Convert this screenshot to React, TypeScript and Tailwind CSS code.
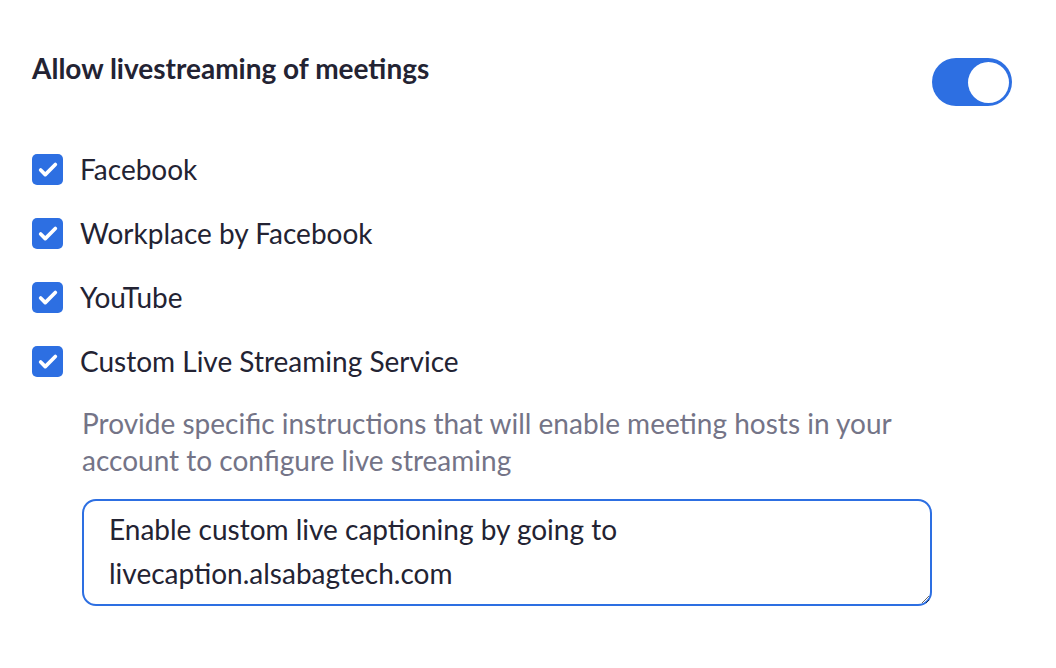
import { Check } from 'lucide-react';

const services = ['Facebook', 'Workplace by Facebook', 'YouTube', 'Custom Live Streaming Service'];

function CheckBox() {
  return (
    <span className="flex h-[31px] w-[31px] shrink-0 items-center justify-center rounded-[5px] bg-[#2d6fe2]">
      <Check className="h-[22px] w-[22px] text-white" strokeWidth={4} />
    </span>
  );
}

export default function App() {
  return (
    <div
      className="h-[668px] w-[1056px] bg-white pl-[32px] pr-[44px] pt-[50px] text-[#232333]"
      style={{ fontFamily: 'Lato, "Noto Sans", sans-serif' }}
    >
      <div className="flex items-start justify-between">
        <h2 className="text-[28px] font-bold leading-[36px]">Allow livestreaming of meetings</h2>
        <div className="mt-[8px] flex h-[48px] w-[80px] items-center justify-end rounded-full bg-[#2d6fe2] px-[3px]">
          <span className="h-[41px] w-[41px] rounded-full bg-white" />
        </div>
      </div>

      <div className="mt-[48px] flex flex-col gap-[33px]">
        {services.map((s) => (
          <label key={s} className="flex items-center gap-[17px]">
            <CheckBox />
            <span className="text-[28px] leading-[31px]">{s}</span>
          </label>
        ))}
      </div>

      <div className="ml-[50px] mt-[28px]">
        <p className="w-[840px] text-[28px] leading-[37px] text-[#747487]">
          Provide specific instructions that will enable meeting hosts in your account to configure live streaming
        </p>
        <textarea
          className="mt-[20px] block h-[107px] w-[850px] resize rounded-[14px] border-2 border-[#2d6fe2] px-[25px] pt-[6px] text-[28px] leading-[44px] text-[#232333] outline-none"
          style={{ fontFamily: 'Lato, "Noto Sans", sans-serif' }}
          defaultValue="Enable custom live captioning by going to livecaption.alsabagtech.com"
        />
      </div>
    </div>
  );
}
